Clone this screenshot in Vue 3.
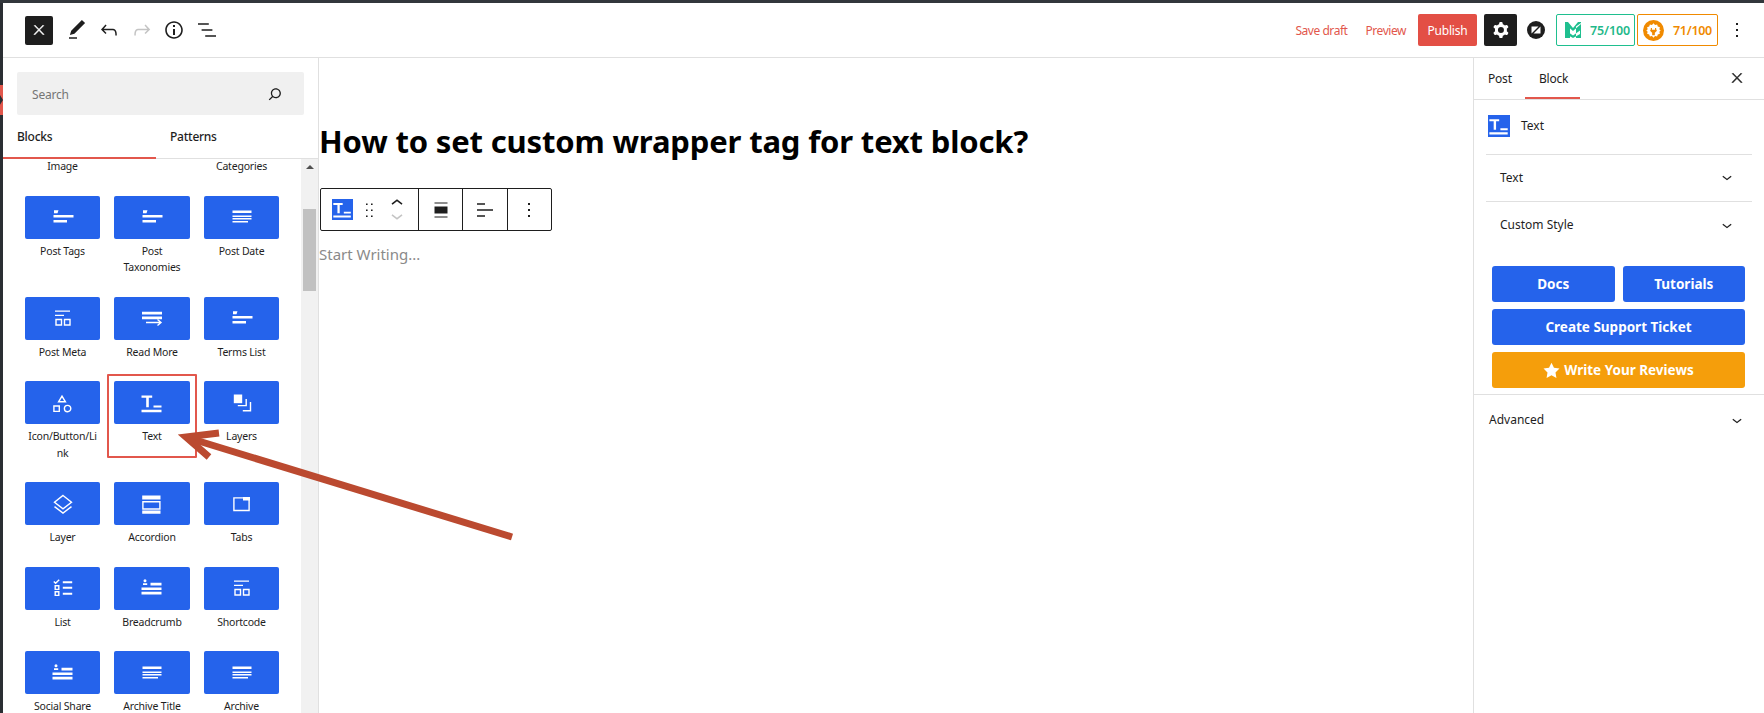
<template>
  <div class="editor">
    <span class="edge"><span class="edge-mark"></span></span>
    <header class="topbar">
      <div class="tools">
        <button class="close-btn">
          <svg viewBox="0 0 24 24" width="16" height="16"><path :d="paths.close" fill="#fff" stroke="#fff" stroke-width="0.8" /></svg>
        </button>
        <svg class="tool first" viewBox="0 0 24 24"><path :d="paths.pencil" /></svg>
        <svg class="tool" viewBox="0 0 24 24"><path :d="paths.undo" /></svg>
        <svg class="tool muted" viewBox="0 0 24 24"><path :d="paths.redo" /></svg>
        <svg class="tool" viewBox="0 0 24 24"><path :d="paths.info" /></svg>
        <svg class="tool" viewBox="0 0 24 24"><path :d="paths.list" /></svg>
      </div>
      <div class="actions">
        <a class="link save">Save draft</a>
        <a class="link preview">Preview</a>
        <button class="publish">Publish</button>
        <button class="settings">
          <svg viewBox="0 0 24 24" width="24" height="24"><path :d="paths.cog" fill="#fff" fill-rule="evenodd" /></svg>
        </button>
        <svg class="plugin-logo" viewBox="0 0 18 18" width="18" height="18">
          <circle cx="9" cy="9" r="9" fill="#1e1e1e" />
          <path d="M4.5 5.5h7L4.5 12.5ZM13.5 12.5h-7L13.5 5.5Z" fill="#fff" />
        </svg>
        <div class="score green">
          <svg viewBox="0 0 16 16" width="16" height="16">
            <path d="M0 1l5 3.5V16H0ZM16 1l-5 3.5V16h5ZM1 8.5l7 5 7-5v3.5l-7 4-7-4ZM0 0h3l5 6 5-6h3v2l-8 7-8-7Z" fill="#1fbf8f" />
          </svg>
          <span>75/100</span>
        </div>
        <div class="score orange">
          <svg viewBox="0 0 22 22" width="21" height="21">
            <circle cx="11" cy="11" r="11" fill="#f08a00" />
            <path d="M11 3.5l1.6 1.7 2.2-.6.7 2.2 2.2.7-.6 2.2L18.5 11l-1.4 1.3.6 2.2-2.2.7-.7 2.2-2.2-.6L11 18.5l-1.6-1.7-2.2.6-.7-2.2-2.2-.7.6-2.2L3.5 11l1.4-1.3-.6-2.2 2.2-.7.7-2.2 2.2.6Z" fill="#fff" />
            <path d="M8.2 8.5h1.2v1.6h3.2V8.5h1.2v1.6h.6v1.4l-2 1.8V16h-2.8v-2.700l-2-1.800v-1.400h.6Z" fill="#f08a00" />
          </svg>
          <span>71/100</span>
        </div>
        <svg class="tool more" viewBox="0 0 24 24"><path :d="paths.more" /></svg>
      </div>
    </header>

    <div class="body">
      <aside class="inserter">
        <div class="search">
          <span>Search</span>
          <svg viewBox="0 0 24 24" width="20" height="20"><path :d="paths.search" fill="#1e1e1e" /></svg>
        </div>
        <div class="tabs">
          <div class="tab active">Blocks</div>
          <div class="tab">Patterns</div>
        </div>
        <div class="list-wrap">
          <div class="blocks">
            <div class="cut-label">Image</div>
            <div></div>
            <div class="cut-label">Categories</div>
            <div v-for="b in blocks" :key="b.name" class="block">
              <div class="block-icon">
                <svg viewBox="0 0 24 24" width="24" height="24">
                  <path :d="icons[b.icon].fill" fill="#fff" />
                  <path :d="icons[b.icon].line" fill="none" stroke="#fff" stroke-width="1.4" />
                </svg>
              </div>
              <div class="block-name">{{ b.name }}</div>
            </div>
          </div>
          <div class="scrollbar">
            <span class="arrow-up"></span>
            <span class="thumb"></span>
          </div>
        </div>
      </aside>

      <main class="canvas">
        <h1>How to set custom wrapper tag for text block?</h1>
        <div class="block-toolbar">
          <div class="group first-group">
            <span class="t-icon">
              <svg viewBox="0 0 24 24" width="21" height="21"><path :d="icons.text.fill" fill="#fff" /></svg>
            </span>
            <svg class="drag" viewBox="0 0 24 24" width="24" height="24"><path :d="paths.drag" /></svg>
            <div class="movers">
              <svg viewBox="0 4.800 24 12" width="24" height="12"><path :d="paths.up" /></svg>
              <svg class="muted" viewBox="0 7.200 24 12" width="24" height="12"><path :d="paths.down" /></svg>
            </div>
          </div>
          <div class="group"><svg viewBox="0 0 24 24" width="24" height="24"><path :d="paths.wide" /></svg></div>
          <div class="group"><svg viewBox="0 0 24 24" width="24" height="24"><path :d="paths.left" /></svg></div>
          <div class="group"><svg viewBox="0 0 24 24" width="24" height="24"><path :d="paths.more" /></svg></div>
        </div>
        <p class="placeholder">Start Writing...</p>
      </main>

      <aside class="sidebar">
        <div class="side-head">
          <span class="side-tab post">Post</span>
          <span class="side-tab current">Block</span>
          <svg class="side-close" viewBox="0 0 24 24" width="16" height="16"><path :d="paths.close" fill="#1e1e1e" stroke="#1e1e1e" stroke-width="0.8" /></svg>
        </div>
        <div class="side-inner">
          <div class="card">
            <span class="t-icon">
              <svg viewBox="0 0 24 24" width="22" height="22"><path :d="icons.text.fill" fill="#fff" /></svg>
            </span>
            <span>Text</span>
          </div>
          <div class="row boxed">
            <span>Text</span>
            <svg viewBox="0 0 24 24" width="20" height="20"><path :d="paths.down" /></svg>
          </div>
          <div class="row">
            <span>Custom Style</span>
            <svg viewBox="0 0 24 24" width="20" height="20"><path :d="paths.down" /></svg>
          </div>
          <div class="links">
            <div class="pair">
              <a class="cta">Docs</a>
              <a class="cta">Tutorials</a>
            </div>
            <a class="cta">Create Support Ticket</a>
            <a class="cta amber">
              <svg viewBox="0 0 20 20" width="17" height="17">
                <path d="M10 .8l2.900 6 6.500.9-4.700 4.600 1.100 6.500-5.800-3.100-5.800 3.100 1.100-6.500L.6 7.700l6.500-.9Z" fill="#fff" />
              </svg>
              Write Your Reviews
            </a>
          </div>
        </div>
        <div class="row advanced">
          <span>Advanced</span>
          <svg viewBox="0 0 24 24" width="20" height="20"><path :d="paths.down" /></svg>
        </div>
      </aside>
    </div>

    <!-- annotation drawn on top of the screenshot -->
    <div class="callout"></div>
    <svg class="pointer" width="1764" height="713" viewBox="0 0 1764 713">
      <path d="M512 537L192 439" stroke="#bb4a30" stroke-width="7" fill="none" />
      <path d="M219 433L186 437L209 457" stroke="#bb4a30" stroke-width="7" fill="none" />
    </svg>
  </div>
</template>

<script setup>
const paths = {
  close: 'M13 11.8l6.1-6.3-1-1-6.1 6.2-6.1-6.2-1 1 6.1 6.3-6.5 6.7 1 1 6.5-6.6 6.5 6.6 1-1z',
  pencil: 'M20.1 5.1L16.9 2 6.2 12.7l-1.3 4.4 4.5-1.3L20.1 5.1zM4 20.8h8v-1.5H4v1.5z',
  undo: 'M18.3 11.7c-.6-.6-1.4-.9-2.3-.9H6.7l2.9-3.3-1.1-1-4.5 5L8.5 16l1-1-2.7-2.7H16c.5 0 .9.2 1.3.5 1 1 1 3.4 1 4.5v.3h1.5v-.2c0-1.5 0-4.3-1.5-5.7z',
  redo: 'M15.6 6.5l-1.1 1 2.9 3.3H8c-.9 0-1.7.3-2.3.9-1.4 1.5-1.4 4.2-1.4 5.6v.2h1.5v-.3c0-1.1 0-3.5 1-4.5.3-.3.7-.5 1.3-.5h9.2L14.5 15l1.1 1.1 4.6-4.6-4.6-5z',
  info: 'M12 3.2c-4.8 0-8.8 3.9-8.8 8.8 0 4.8 3.9 8.8 8.8 8.8 4.8 0 8.8-3.9 8.8-8.8 0-4.8-4-8.8-8.8-8.8zm0 16c-4 0-7.2-3.3-7.2-7.2C4.8 8 8 4.8 12 4.8s7.2 3.3 7.2 7.2c0 4-3.2 7.2-7.2 7.2zM11 17h2v-6h-2v6zm0-8h2V7h-2v2z',
  list: 'M13.8 5.2H3v1.5h10.8V5.2zm-3.6 12v1.5H21v-1.5H10.2zm7.2-6H6.6v1.5h10.8v-1.5z',
  cog: 'M10.289 4.836A1 1 0 0111.275 4h1.306a1 1 0 01.987.836l.244 1.466c.787.26 1.503.679 2.108 1.218l1.393-.522a1 1 0 011.216.437l.653 1.13a1 1 0 01-.23 1.273l-1.148.944a6.025 6.025 0 010 2.435l1.149.946a1 1 0 01.23 1.272l-.653 1.13a1 1 0 01-1.216.437l-1.394-.522c-.605.54-1.32.958-2.108 1.218l-.244 1.466a1 1 0 01-.987.836h-1.306a1 1 0 01-.986-.836l-.244-1.466a5.995 5.995 0 01-2.108-1.218l-1.394.522a1 1 0 01-1.217-.436l-.653-1.131a1 1 0 01.23-1.272l1.149-.946a6.026 6.026 0 010-2.435l-1.148-.944a1 1 0 01-.23-1.272l.653-1.131a1 1 0 011.217-.437l1.393.522a5.994 5.994 0 012.108-1.218l.244-1.466zM14.929 12a3 3 0 11-6 0 3 3 0 016 0z',
  more: 'M13 19h-2v-2h2v2zm0-6h-2v-2h2v2zm0-6h-2V5h2v2z',
  search: 'M13 5c-3.3 0-6 2.7-6 6 0 1.4.5 2.7 1.3 3.7l-3.8 3.8 1.1 1.1 3.8-3.8c1 .8 2.3 1.3 3.7 1.3 3.3 0 6-2.7 6-6S16.3 5 13 5zm0 10.5c-2.5 0-4.5-2-4.5-4.5s2-4.5 4.5-4.5 4.5 2 4.5 4.5-2 4.5-4.5 4.5z',
  down: 'M17.5 11.6L12 16l-5.5-4.4.9-1.2L12 14l4.5-3.6 1 1.2z',
  up: 'M6.5 12.4L12 8l5.5 4.4-.9 1.2L12 10l-4.5 3.6-1-1.2z',
  drag: 'M9 7h1.600V5.400H9V7zm0 6h1.600v-1.600H9V13zm0 6h1.600v-1.600H9V19zm5-13.600V7h1.600V5.400H14zm0 7.600h1.600v-1.600H14V13zm0 6h1.600v-1.600H14V19z',
  wide: 'M18.500 5.500h-13V4.500h13v1zM18.500 19.500h-13v-1h13v1zM5.500 8.500h13v7h-13z',
  left: 'M4 5.200h8v1.500H4zM4 11.200h16v1.500H4zM4 17.200h8v1.500H4z',
}

// white glyphs on the blue tiles, filled part and outlined part
const tags = { fill: 'M3 5.200h4.500l-1 3H3zM2.500 10h20v2.600h-20zM2.500 15h13.500v2.600H2.500z', line: '' }
const lines = { fill: 'M2.500 5.500h19V8h-19zM2.500 10.500h19V12h-19zM2.500 13h19v1.500h-19zM2.500 16h15.500v1.500H2.500z', line: '' }
const meta = { fill: 'M4 4.500h15v1.200H4zM4 8.800h9V10H4z', line: 'M5 13.500h5.500v5.500H5zM13.500 13.500H19v5.500h-5.500z' }
const person = {
  fill: 'M5 3.200a1.500 1.500 0 110 3 1.500 1.500 0 010-3zM3 9V7.200h4.200V9zM10.500 6.800h11v2.700h-11zM1.500 11.500h20v2.400h-20zM1.500 15.800h20v2.700h-20z',
  line: '',
}
const icons = {
  tags,
  lines,
  meta,
  person,
  more: { fill: 'M2 5.800h20v2.700H2zM2 10.500h20v2.700H2z', line: 'M6 16.500h15M17.500 13.500l3.500 3-3.500 3' },
  shapes: { fill: '', line: 'M11 5.200L7.600 10.800h6.800ZM2.900 15h5.400v5.400H2.900zM19.800 17.600a3.200 3.200 0 11-6.400 0 3.200 3.200 0 016.400 0z' },
  text: { fill: 'M1.500 4.500h10.700v2.300H8.800v9.400H6.200V6.800H1.500zM13.500 14.500h8v2h-8zM1.500 18.800h20v2.400h-20z', line: '' },
  layers: { fill: 'M3.800 3.500h8.400v8.700H3.800z', line: 'M7.800 14.600h8.400V8M12.800 19.800h7.700V11' },
  layer: { fill: '', line: 'M12 3.500l8.500 6.700L12 16.800 3.500 10.200ZM3.500 14.600l8.500 6.400 8.500-6.400' },
  accordion: { fill: 'M2.200 3.500h18.300v4H2.200zM2.200 18.500h18.300v3.300H2.200z', line: 'M2.900 9.700h17v7.300h-17z' },
  tabs: { fill: 'M13 5h7v3.500h-7z', line: 'M3.900 5.900h15.200v12.600H3.900z' },
  checklist: {
    fill: 'M11.800 5.200h9.400v2h-9.400zM11.800 10.800h9.400v2h-9.400zM11.800 16.800h9.400v2h-9.400z',
    line: 'M2.800 5.500l1.800 1.800 3.600-3.600M4.200 9.800h3.600v3.600H4.200zM4.200 15.800h3.600v3.600H4.200z',
  },
}

const blocks = [
  { name: 'Post Tags', icon: 'tags' },
  { name: 'Post Taxonomies', icon: 'tags' },
  { name: 'Post Date', icon: 'lines' },
  { name: 'Post Meta', icon: 'meta' },
  { name: 'Read More', icon: 'more' },
  { name: 'Terms List', icon: 'tags' },
  { name: 'Icon/Button/Link', icon: 'shapes' },
  { name: 'Text', icon: 'text' },
  { name: 'Layers', icon: 'layers' },
  { name: 'Layer', icon: 'layer' },
  { name: 'Accordion', icon: 'accordion' },
  { name: 'Tabs', icon: 'tabs' },
  { name: 'List', icon: 'checklist' },
  { name: 'Breadcrumb', icon: 'person' },
  { name: 'Shortcode', icon: 'meta' },
  { name: 'Social Share', icon: 'person' },
  { name: 'Archive Title', icon: 'lines' },
  { name: 'Archive', icon: 'lines' },
]
</script>

<style>
html,
body {
  margin: 0;
  background: #fff;
}
</style>

<style scoped>
.editor {
  position: relative;
  width: 1764px;
  height: 713px;
  box-sizing: border-box;
  overflow: hidden;
  border-top: 3px solid #32373c;
  padding-left: 3px;
  background: #fff;
  font-family: "Noto Sans", sans-serif;
  font-size: 12px;
  color: #1e1e1e;
}
.edge {
  position: absolute;
  left: 0;
  top: 0;
  bottom: 0;
  width: 3px;
  background: #2a2e33;
}
.edge-mark {
  position: absolute;
  left: 0;
  top: 82px;
  width: 3px;
  height: 30px;
  background: #e2574c;
  clip-path: polygon(0 0, 100% 0, 100% 100%, 0 100%, 0 66%, 100% 50%, 0 33%);
}
button {
  border: 0;
  padding: 0;
  font: inherit;
}

/* top bar */
.topbar {
  display: flex;
  align-items: center;
  justify-content: space-between;
  height: 54px;
  border-bottom: 1px solid #e0e0e0;
}
.tools,
.actions {
  display: flex;
  align-items: center;
}
.tools {
  padding-left: 22px;
}
.close-btn {
  display: flex;
  align-items: center;
  justify-content: center;
  width: 28px;
  height: 29px;
  border-radius: 2px;
  background: #1e1e1e;
}
.tool {
  width: 24px;
  height: 24px;
  margin-left: 8.5px;
  fill: #1e1e1e;
}
.tool.first {
  margin-left: 11.5px;
}
.muted {
  fill: #c4c4c4;
}
.actions {
  padding-right: 15px;
}
.link {
  color: #e2574c;
  letter-spacing: -0.45px;
}
.preview {
  margin-left: 18px;
}
.publish {
  width: 59px;
  height: 32px;
  margin-left: 12px;
  border-radius: 2px;
  background: #e34f45;
  color: #fff;
  letter-spacing: -0.2px;
}
.settings {
  display: flex;
  align-items: center;
  justify-content: center;
  width: 33px;
  height: 32px;
  margin-left: 7px;
  border-radius: 2px;
  background: #1e1e1e;
}
.plugin-logo {
  margin: 0 11px 0 10px;
}
.score {
  display: flex;
  align-items: center;
  box-sizing: border-box;
  height: 32px;
  border: 1px solid;
  border-radius: 2px;
  font-size: 12.5px;
  font-weight: 600;
  letter-spacing: -0.1px;
}
.score.green {
  gap: 9px;
  width: 79px;
  padding-left: 8px;
  border-color: #1fbf8f;
  color: #1fb98a;
}
.score.orange {
  gap: 9px;
  width: 81px;
  margin-left: 2px;
  padding-left: 5px;
  border-color: #f08a00;
  color: #f08a00;
  letter-spacing: -0.3px;
}
.tool.more {
  margin-left: 7px;
}

/* layout */
.body {
  display: flex;
  height: 655px;
}
.inserter {
  flex: none;
  display: flex;
  flex-direction: column;
  box-sizing: border-box;
  width: 316px;
  border-right: 1px solid #e0e0e0;
}
.canvas {
  flex: 1;
  min-width: 0;
}
.sidebar {
  flex: none;
  box-sizing: border-box;
  width: 291px;
  border-left: 1px solid #e0e0e0;
}

/* inserter */
.search {
  flex: none;
  display: flex;
  align-items: center;
  justify-content: space-between;
  box-sizing: border-box;
  width: 287px;
  height: 43px;
  margin: 14px 0 0 14px;
  padding: 0 19px 0 15px;
  border-radius: 2px;
  background: #f0f0f0;
  color: #757575;
}
.search span {
  padding-top: 2px;
  letter-spacing: -0.2px;
}
.tabs {
  flex: none;
  display: flex;
  height: 44px;
  border-bottom: 1px solid #e0e0e0;
  box-sizing: border-box;
}
.tab {
  width: 153px;
  box-sizing: border-box;
  padding: 13px 0 0 14px;
  line-height: 18px;
  font-weight: 500;
  letter-spacing: -0.25px;
}
.tab.active {
  height: 44px;
  border-bottom: 2px solid #e2574c;
}
.list-wrap {
  flex: 1;
  display: flex;
  min-height: 0;
}
.blocks {
  flex: 1;
  align-self: flex-start;
  display: grid;
  grid-template-columns: 75px 76px 75px;
  gap: 21px 14px;
  margin-top: -1px;
  padding-left: 22px;
}
.cut-label,
.block-name {
  padding: 0 3px;
  font-size: 10.5px;
  letter-spacing: -0.2px;
  line-height: 16.5px;
  text-align: center;
  overflow-wrap: anywhere;
}
.block-icon {
  display: flex;
  align-items: center;
  justify-content: center;
  height: 43px;
  margin-bottom: 4px;
  border-radius: 2px;
  background: #2563eb;
}
.scrollbar {
  flex: none;
  display: flex;
  flex-direction: column;
  align-items: center;
  width: 17px;
  background: #f1f1f1;
}
.arrow-up {
  margin-top: 6px;
  border: 4px solid transparent;
  border-top: 0;
  border-bottom: 4px solid #505050;
}
.thumb {
  width: 13px;
  height: 82px;
  margin-top: 40px;
  background: #c1c1c1;
}

/* canvas */
h1 {
  margin: 61px 0 0;
  font-size: 31px;
  letter-spacing: -0.16px;
  line-height: 44px;
  font-weight: 700;
  color: #000;
}
.block-toolbar {
  display: flex;
  box-sizing: border-box;
  width: 232px;
  height: 43px;
  margin: 25px 0 0 1px;
  border: 1px solid #1e1e1e;
  border-radius: 2px;
}
.group {
  display: flex;
  align-items: center;
  justify-content: center;
  width: 44px;
  border-right: 1px solid #1e1e1e;
}
.group:last-child {
  border-right: 0;
}
.group svg {
  fill: #1e1e1e;
}
.group .muted {
  fill: #c4c4c4;
}
.first-group {
  justify-content: flex-start;
  width: 99px;
  padding-left: 11px;
  box-sizing: border-box;
}
.t-icon {
  display: inline-flex;
  background: #2563eb;
}
.drag {
  margin-left: 4px;
}
.movers {
  display: flex;
  flex-direction: column;
  gap: 2.7px;
  margin-left: 3.7px;
}
.placeholder {
  margin: 11px 0 0;
  font-size: 15px;
  line-height: 24px;
  color: #8a8a8a;
}

/* sidebar */
.side-head {
  position: relative;
  display: flex;
  height: 41px;
  border-bottom: 1px solid #e0e0e0;
}
.side-tab {
  box-sizing: border-box;
  height: 41px;
  line-height: 42px;
  letter-spacing: -0.2px;
}
.post {
  width: 37px;
  margin-left: 14px;
}
.current {
  width: 55px;
  padding-left: 14px;
  border-bottom: 2px solid #e2574c;
}
.side-close {
  position: absolute;
  right: 19px;
  top: 12px;
}
.side-inner {
  padding: 0 12px;
  border-bottom: 1px solid #e0e0e0;
}
.card {
  display: flex;
  align-items: center;
  gap: 11px;
  height: 55px;
  padding-left: 2px;
  border-bottom: 1px solid #e0e0e0;
  padding-bottom: 3px;
  box-sizing: border-box;
}
.row {
  display: flex;
  align-items: center;
  justify-content: space-between;
  height: 47px;
  padding: 0 15px 2px 14px;
  box-sizing: border-box;
}
.row.boxed {
  border-bottom: 1px solid #e0e0e0;
}
.row svg {
  fill: #1e1e1e;
}
.links {
  display: flex;
  flex-direction: column;
  gap: 7px;
  padding: 17px 7px 6px 6px;
}
.pair {
  display: flex;
  gap: 8px;
}
.pair .cta {
  flex: 1;
}
.cta {
  display: flex;
  align-items: center;
  justify-content: center;
  gap: 4px;
  height: 36px;
  border-radius: 3px;
  background: #2563eb;
  color: #fff;
  font-size: 13.5px;
  font-weight: 700;
}
.cta.amber {
  background: #f59e0b;
}
.row.advanced {
  padding: 2px 17px 0 15px;
}

/* annotation */
.callout {
  position: absolute;
  left: 107px;
  top: 371px;
  width: 86px;
  height: 80px;
  border: 2px solid #e2574c;
  border-radius: 1px;
}
.pointer {
  position: absolute;
  left: 0;
  top: -3px;
  pointer-events: none;
}
</style>
